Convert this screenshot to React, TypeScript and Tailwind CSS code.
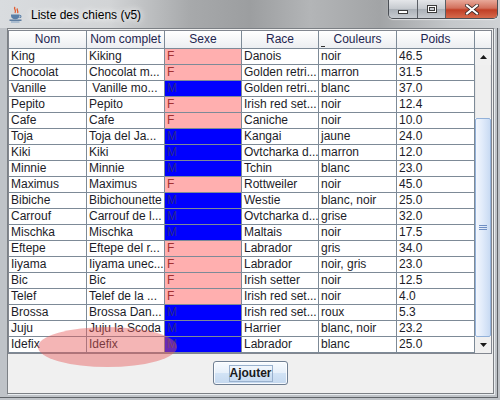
import React from "react";

type Row = [string, string, "F" | "M", string, string, string];

const rows: Row[] = [
  ["King", "Kiking", "F", "Danois", "noir", "46.5"],
  ["Chocolat", "Chocolat m...", "F", "Golden retri...", "marron", "31.5"],
  ["Vanille", " Vanille mo...", "M", "Golden retri...", "blanc", "37.0"],
  ["Pepito", "Pepito", "F", "Irish red set...", "noir", "12.4"],
  ["Cafe", "Cafe", "F", "Caniche", "noir", "10.0"],
  ["Toja", "Toja del Ja...", "M", "Kangai", "jaune", "24.0"],
  ["Kiki", "Kiki", "M", "Ovtcharka d...", "marron", "12.0"],
  ["Minnie", "Minnie", "M", "Tchin", "blanc", "23.0"],
  ["Maximus", "Maximus", "F", "Rottweiler", "noir", "45.0"],
  ["Bibiche", "Bibichounette", "M", "Westie", "blanc, noir", "25.0"],
  ["Carrouf", "Carrouf de l...", "M", "Ovtcharka d...", "grise", "32.0"],
  ["Mischka", "Mischka", "M", "Maltais", "noir", "17.5"],
  ["Eftepe", "Eftepe del r...", "F", "Labrador", "gris", "34.0"],
  ["Iiyama", "Iiyama unec...", "F", "Labrador", "noir, gris", "23.0"],
  ["Bic", "Bic", "F", "Irish setter", "noir", "12.5"],
  ["Telef", "Telef de la ...", "F", "Irish red set...", "noir", "4.0"],
  ["Brossa", "Brossa Dan...", "M", "Irish red set...", "roux", "5.3"],
  ["Juju", "Juju la Scoda", "M", "Harrier", "blanc, noir", "23.2"],
  ["Idefix", "Idefix", "M", "Labrador", "blanc", "25.0"],
];

const headers = ["Nom", "Nom complet", "Sexe", "Race", "Couleurs", "Poids"];

function JavaIcon() {
  return (
    <svg width="16" height="17" viewBox="0 0 16 17">
      <path d="M7 1c-2 2 2 3 0 6M9.5 2.5c-1.5 1.5 1.5 2.5 0 4.5" stroke="#e2572a" strokeWidth="1.3" fill="none" />
      <path d="M3 8.5h8.5v1.2c0 2.2-1.6 3.6-4.2 3.6S3 11.9 3 9.7z" fill="#5a7fa8" />
      <path d="M11.5 9.2c2 0 2 2.4 0 2.4" stroke="#5a7fa8" strokeWidth="1.1" fill="none" />
      <path d="M1.5 14.2h12" stroke="#4a6d96" strokeWidth="1.3" />
      <path d="M3 16h8.5" stroke="#7e9dc0" strokeWidth="1" />
    </svg>
  );
}

function CaptionButtons() {
  return (
    <div className="ml-auto mr-[2px] flex h-[19px] self-start overflow-hidden rounded-b-[5px] border border-t-0 border-[#4b4f55] shadow-[0_1px_1px_rgba(255,255,255,0.6)]">
      <div className="flex w-[29px] items-center justify-center border-r border-[#5a5e64] bg-[linear-gradient(#e4e6e9,#c5c9ce_50%,#aab0b7_51%,#c8ccd1)]">
        <div className="mt-[5px] h-[4px] w-[10px] border border-[#3c3c3c] bg-white" />
      </div>
      <div className="flex w-[28px] items-center justify-center border-r border-[#5a5e64] bg-[linear-gradient(#e4e6e9,#c5c9ce_50%,#aab0b7_51%,#c8ccd1)]">
        <div className="h-[8px] w-[10px] border border-[#3c3c3c] bg-white p-[1px]">
          <div className="h-full w-full border border-[#3c3c3c] bg-[#c9cdd2]" />
        </div>
      </div>
      <div className="flex w-[51px] items-center justify-center bg-[linear-gradient(#e8a99a,#d2705c_45%,#c13f26_55%,#d66a4c)]">
        <svg width="14" height="11" viewBox="0 0 14 11">
          <path d="M2 1.5l10 8M12 1.5l-10 8" stroke="#3a2a28" strokeWidth="3.6" strokeLinecap="square" />
          <path d="M2 1.5l10 8M12 1.5l-10 8" stroke="#ffffff" strokeWidth="2" strokeLinecap="square" />
        </svg>
      </div>
    </div>
  );
}

function Scrollbar() {
  return (
    <div className="flex w-[16px] flex-col">
      <div className="h-[18px] border-b border-[#7d8a97] bg-[linear-gradient(#ffffff,#eceef1)]" />
      <div className="flex h-[16px] items-center justify-center bg-[#f0f0f0]">
        <svg width="7" height="4" viewBox="0 0 7 4">
          <path d="M0 4L3.5 0L7 4z" fill="#1a1a1a" />
        </svg>
      </div>
      <div className="h-[53px] border-x border-[#e6e6e6] bg-[#efefef]" />
      <div className="flex h-[219px] items-center justify-center rounded-[2px] border border-[#92b1d9] bg-[linear-gradient(90deg,#f3f7fd,#dfeafa_50%,#c9dbf3)]">
        <div className="flex w-[8px] flex-col gap-[1px]">
          <div className="h-[1px] bg-[#6f8fc4]" />
          <div className="h-[1px] bg-[#6f8fc4]" />
          <div className="h-[1px] bg-[#6f8fc4]" />
        </div>
      </div>
      <div className="flex h-[16px] items-center justify-center bg-[#f0f0f0]">
        <svg width="7" height="4" viewBox="0 0 7 4">
          <path d="M0 0L3.5 4L7 0z" fill="#1a1a1a" />
        </svg>
      </div>
    </div>
  );
}

function Table() {
  return (
    <div className="flex">
      <div className="grid grid-cols-[78px_78px_77px_77px_78px_78px] auto-rows-min">
        {headers.map((h) => (
          <div
            key={h}
            className="h-[18px] border-r border-b border-[#7d8a97] bg-[linear-gradient(#ffffff,#eceef1)] text-center text-[12px] leading-[17px] text-[#1e2550]"
          >
            {h}
          </div>
        ))}
        {rows.map((r, i) =>
          r.map((v, j) => {
            const isSex = j === 2;
            const bg = isSex ? (v === "F" ? "bg-[#ffafaf] text-[#a33232]" : "bg-[#0000ff] text-[#2a2a8a]") : "bg-white text-[#1c1c28]";
            return (
              <div
                key={`${i}-${j}`}
                className={`h-[16px] overflow-hidden whitespace-pre border-r border-b border-[#7d8a97] pl-[2px] text-[12px] leading-[15px] ${bg}`}
              >
                {v}
              </div>
            );
          })
        )}
      </div>
      <Scrollbar />
    </div>
  );
}

export default function App() {
  return (
    <div
      className="relative flex h-[400px] w-[500px] flex-col overflow-hidden bg-[#bfc3c8] font-['Liberation_Sans',Arial,sans-serif]"
    >
      <div className="flex h-[28px] bg-[linear-gradient(90deg,#d9dcdf,#d2d4d6_22%,#a7a9ab_38%,#9c9ea0_50%,#b3b5b7_62%,#a2a4a6_76%,#c4c7ca_90%,#cfd2d5)]">
        <div className="ml-[8px] mt-[6px]">
          <JavaIcon />
        </div>
        <div className="ml-[5px] mt-[7px] h-[16px] px-[2px] text-[12px] leading-[16px] text-black [text-shadow:0_0_6px_#fff,0_0_10px_#fff]">
          Liste des chiens (v5)
        </div>
        <CaptionButtons />
      </div>

      <div className="flex flex-1 pb-[6px] pl-[7px] pr-[5px]">
        <div className="flex h-[366px] w-[487px] flex-col items-center border border-[#7c8085] bg-[#f0f0f0] shadow-[1px_1px_0_#e8ecef]">
          <div className="mt-[1px] mr-[1px] self-start border border-[#828790] bg-white">
            <Table />
          </div>
          <div className="mt-[7px] flex h-[24px] w-[75px] items-center justify-center rounded-[3px] border border-[#6f7f93] bg-[linear-gradient(#f7fbff,#e7f0fa_48%,#d2e3f5_52%,#c4d8ef)] shadow-[inset_0_0_0_1px_rgba(255,255,255,0.8)]">
            <div className="flex h-[17px] w-[44px] items-center justify-center border border-[#98b0cd] text-[12px] font-bold leading-[15px] text-[#1a1a1a]">
              Ajouter
            </div>
          </div>
        </div>
      </div>

      <div className="pointer-events-none absolute left-[321px] top-[46px] h-[1px] w-[4px] bg-[#333]" />
      <div className="pointer-events-none absolute left-[38px] top-[327px] h-[40px] w-[139px] rounded-[50%] bg-[rgba(230,90,90,0.45)]" />
      <div className="pointer-events-none absolute bottom-[2px] right-[2px] top-[28px] w-[1px] bg-[#5f6368]" />
      <div className="pointer-events-none absolute bottom-[2px] left-0 right-[2px] h-[1px] bg-[#5f6368]" />
    </div>
  );
}
